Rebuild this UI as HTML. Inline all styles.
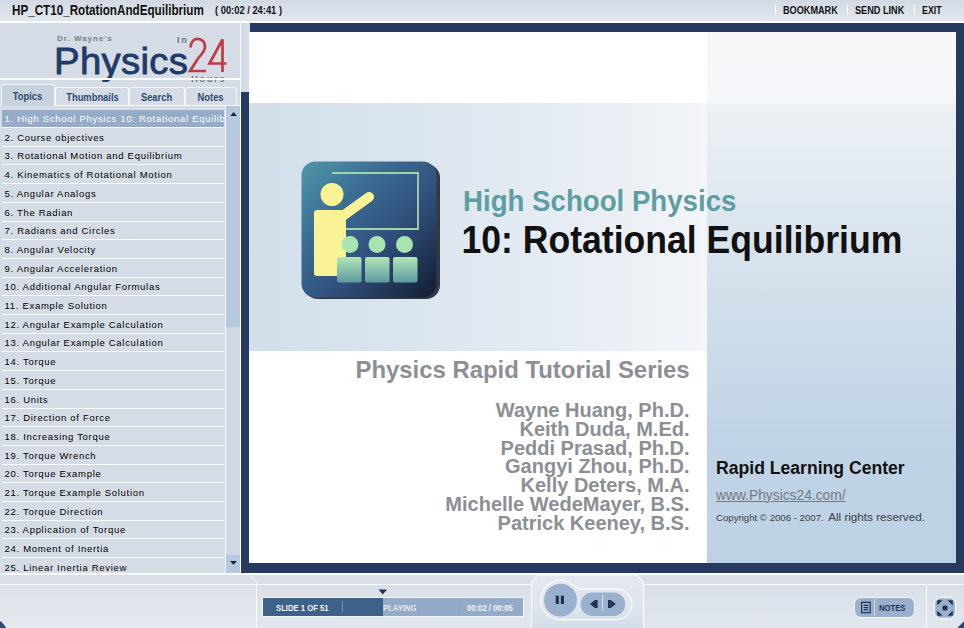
<!DOCTYPE html>
<html><head><meta charset="utf-8">
<style>
*{margin:0;padding:0;box-sizing:border-box}
html,body{width:964px;height:628px;overflow:hidden;background:#d6dce6;font-family:"Liberation Sans",sans-serif;position:relative}
div{position:absolute}
.tt{font-weight:bold;color:#111;white-space:nowrap;transform-origin:0 0}
.row{left:2px;width:222px;height:17px;background:#d6dce6;font-size:9.5px;color:#000;white-space:nowrap;overflow:hidden;letter-spacing:0.7px;padding-left:2.5px;line-height:17px}
.row.sel{background:#94acc9;color:#fff}
.sep{left:2px;width:222px;height:1px;background:#fbfcfd}
.tab{height:18px;border:1px solid #f4f6f9;border-bottom:none;border-radius:3px 3px 0 0;background:#d6dce6;font-size:10.5px;font-weight:bold;color:#2d4a70;text-align:center;line-height:17px;white-space:nowrap}
.auth{right:0;white-space:nowrap;font-weight:bold;color:#8c8f94;font-size:20px}
</style></head><body>
<!-- title bar -->
<div style="left:0;top:0;width:964px;height:21px;background:linear-gradient(#d3d9e3,#e2e7ee)"></div>
<div style="left:0;top:21px;width:964px;height:2px;background:#fbfcfd"></div>
<div class="tt" style="left:11.5px;top:2px;font-size:14px;transform:scaleX(0.833)">HP_CT10_RotationAndEquilibrium</div>
<div class="tt" style="left:215px;top:4px;font-size:10.5px;transform:scaleX(0.89)">( 00:02 / 24:41 )</div>
<div style="left:775px;top:5px;width:1px;height:10px;background:#fff"></div>
<div style="left:847px;top:5px;width:1px;height:10px;background:#fff"></div>
<div style="left:914px;top:5px;width:1px;height:10px;background:#fff"></div>
<div class="tt" style="left:783px;top:4px;font-size:10.5px;transform:scaleX(0.87)">BOOKMARK</div>
<div class="tt" style="left:855px;top:4px;font-size:10.5px;transform:scaleX(0.87)">SEND LINK</div>
<div class="tt" style="left:922px;top:4px;font-size:10.5px;transform:scaleX(0.84)">EXIT</div>

<!-- left panel -->
<div style="left:0;top:23px;width:240px;height:550px;background:#d6dce6"></div>
<div style="left:240px;top:23px;width:1px;height:550px;background:#f6f8fa"></div>
<!-- logo -->
<div class="tt" style="left:57px;top:33.5px;font-size:8px;color:#7b7f85;letter-spacing:1px">Dr. Wayne's</div>
<div class="tt" style="left:177px;top:34.5px;font-size:9px;color:#6d7177;letter-spacing:1.8px">In</div>
<div class="tt" style="left:54px;top:41px;font-size:36.5px;font-weight:normal;color:#203b68;letter-spacing:0.3px;transform:scaleX(1.05);-webkit-text-stroke:0.8px #203b68">Physics</div>
<svg style="position:absolute;left:0;top:0" width="240" height="85">
<path d="M190.5,47.5 C191,41 194.5,38.8 197.5,38.8 C202,38.8 205,42 205,47 C205,51 202,54 198,58.5 L190,71 L206,71" fill="none" stroke="#c23a42" stroke-width="2.7"/>
<path d="M222.5,72 L222.5,39.5 L209.5,63.5 L226.5,63.5" fill="none" stroke="#c23a42" stroke-width="2.7"/>
<text x="191" y="81.5" font-family="Liberation Sans" font-weight="bold" font-size="9.5" fill="#70757c" letter-spacing="1.5">Hours</text>
</svg>
<div style="left:0;top:78px;width:240px;height:2px;background:#fbfcfd"></div>
<div style="left:0;top:82px;width:240px;height:3px;background:#d6dce6"></div>
<!-- tabs -->
<div style="left:0;top:105px;width:240px;height:1px;background:#f4f6f9"></div>
<div class="tab" style="left:1px;top:84px;width:54px;height:22px;background:#c7d2df;line-height:22px"><span style="display:inline-block;transform:scaleX(0.89)">Topics</span></div>
<div class="tab" style="left:55px;top:87px;width:74px;line-height:18px"><span style="display:inline-block;transform:scaleX(0.89)">Thumbnails</span></div>
<div class="tab" style="left:129px;top:87px;width:56px;line-height:18px"><span style="display:inline-block;transform:scaleX(0.89)">Search</span></div>
<div class="tab" style="left:185px;top:87px;width:52px;line-height:18px"><span style="display:inline-block;transform:scaleX(0.89)">Notes</span></div>
<!-- scrollbar -->
<div style="left:225px;top:106px;width:1px;height:467px;background:#f4f6f9"></div>
<div style="left:226px;top:106px;width:14px;height:467px;background:#cfd8e3"></div>
<div style="left:226px;top:106px;width:14px;height:221px;background:#b5c8de"></div>
<div style="left:226px;top:555px;width:14px;height:18px;background:#b5c8de"></div>
<svg style="position:absolute;left:226px;top:106px" width="14" height="14"><path d="M4.3,10 L7.6,6 L10.9,10 Z" fill="#1a2438"/></svg>
<svg style="position:absolute;left:226px;top:556px" width="14" height="14"><path d="M4,5 L11,5 L7.5,8.8 Z" fill="#1a2438"/></svg>
<div class="row sel" style="top:110.0px">1. High School Physics 10: Rotational Equilibrium</div>
<div class="sep" style="top:127.0px"></div>
<div class="row" style="top:128.7px">2. Course objectives</div>
<div class="sep" style="top:145.7px"></div>
<div class="row" style="top:147.4px">3. Rotational Motion and Equilibrium</div>
<div class="sep" style="top:164.4px"></div>
<div class="row" style="top:166.1px">4. Kinematics of Rotational Motion</div>
<div class="sep" style="top:183.1px"></div>
<div class="row" style="top:184.8px">5. Angular Analogs</div>
<div class="sep" style="top:201.8px"></div>
<div class="row" style="top:203.5px">6. The Radian</div>
<div class="sep" style="top:220.5px"></div>
<div class="row" style="top:222.2px">7. Radians and Circles</div>
<div class="sep" style="top:239.2px"></div>
<div class="row" style="top:240.9px">8. Angular Velocity</div>
<div class="sep" style="top:257.9px"></div>
<div class="row" style="top:259.6px">9. Angular Acceleration</div>
<div class="sep" style="top:276.6px"></div>
<div class="row" style="top:278.3px">10. Additional Angular Formulas</div>
<div class="sep" style="top:295.3px"></div>
<div class="row" style="top:297.0px">11. Example Solution</div>
<div class="sep" style="top:314.0px"></div>
<div class="row" style="top:315.7px">12. Angular Example Calculation</div>
<div class="sep" style="top:332.7px"></div>
<div class="row" style="top:334.4px">13. Angular Example Calculation</div>
<div class="sep" style="top:351.4px"></div>
<div class="row" style="top:353.1px">14. Torque</div>
<div class="sep" style="top:370.1px"></div>
<div class="row" style="top:371.8px">15. Torque</div>
<div class="sep" style="top:388.8px"></div>
<div class="row" style="top:390.5px">16. Units</div>
<div class="sep" style="top:407.5px"></div>
<div class="row" style="top:409.2px">17. Direction of Force</div>
<div class="sep" style="top:426.2px"></div>
<div class="row" style="top:427.9px">18. Increasing Torque</div>
<div class="sep" style="top:444.9px"></div>
<div class="row" style="top:446.6px">19. Torque Wrench</div>
<div class="sep" style="top:463.6px"></div>
<div class="row" style="top:465.3px">20. Torque Example</div>
<div class="sep" style="top:482.3px"></div>
<div class="row" style="top:484.0px">21. Torque Example Solution</div>
<div class="sep" style="top:501.0px"></div>
<div class="row" style="top:502.7px">22. Torque Direction</div>
<div class="sep" style="top:519.7px"></div>
<div class="row" style="top:521.4px">23. Application of Torque</div>
<div class="sep" style="top:538.4px"></div>
<div class="row" style="top:540.1px">24. Moment of Inertia</div>
<div class="sep" style="top:557.1px"></div>
<div class="row" style="top:558.8px">25. Linear Inertia Review</div>
<div class="sep" style="top:575.8px"></div>
<!-- navy frame -->
<div style="left:250px;top:23px;width:714px;height:9px;background:#253a5e"></div>
<div style="left:241px;top:92px;width:8px;height:481px;background:#253a5e"></div>
<div style="left:956px;top:23px;width:8px;height:550px;background:#253a5e"></div>
<div style="left:241px;top:563px;width:723px;height:10px;background:#253a5e"></div>
<!-- slide -->
<div style="left:249px;top:32px;width:707px;height:531px;background:#fff;overflow:hidden">
  <div style="left:0;top:71px;width:458px;height:248px;background:linear-gradient(90deg,#d2dfeb 0%,#d8e3ed 25%,#e3eaf2 60%,#f3f5f8 100%)"></div>
  <div style="left:458px;top:0;width:249px;height:531px;background:linear-gradient(#f6f8fa 0px,#f5f7fa 70px,#edf1f5 72px,#dbe5ee 200px,#cbdbe9 318px,#c1d4e6 400px,#bdd1e5 531px)"></div>
  <svg style="position:absolute;left:52px;top:129px" width="140" height="140" viewBox="301 161 140 140">
    <defs>
      <linearGradient id="ig" x1="0" y1="0" x2="1" y2="1">
        <stop offset="0" stop-color="#4f98a8"/>
        <stop offset="0.3" stop-color="#3c6e94"/>
        <stop offset="0.6" stop-color="#30507c"/>
        <stop offset="1" stop-color="#121c30"/>
      </linearGradient>
      <linearGradient id="sg" x1="0" y1="0" x2="0" y2="1">
        <stop offset="0" stop-color="#b2e6b8"/>
        <stop offset="1" stop-color="#5e9aa0"/>
      </linearGradient>
    </defs>
    <rect x="304" y="164" width="136" height="135" rx="14" fill="#141a24" opacity="0.85"/><rect x="301.5" y="161.5" width="135" height="136" rx="14" fill="url(#ig)"/>
    <path d="M332,173 L418,173 L418,229 L346,229" fill="none" stroke="#9ed6a8" stroke-width="1.8"/>
    <circle cx="332" cy="194.5" r="11.5" fill="#f9f396"/>
    <path d="M340,218 L369,197" stroke="#f9f396" stroke-width="10" stroke-linecap="round"/>
    <rect x="314" y="210" width="32" height="66" rx="3" fill="#f9f396"/>
    <circle cx="350" cy="244.5" r="8.5" fill="#a8e4b0"/>
    <circle cx="377" cy="244.5" r="8.5" fill="#a8e4b0"/>
    <circle cx="404.5" cy="244.5" r="8.5" fill="#a8e4b0"/>
    <rect x="337" y="257" width="24.5" height="25.5" rx="2" fill="url(#sg)"/>
    <rect x="365" y="257" width="24.5" height="25.5" rx="2" fill="url(#sg)"/>
    <rect x="393" y="257" width="24.5" height="25.5" rx="2" fill="url(#sg)"/>
  </svg>
</div>
<div style="left:463px;top:184px;transform:scaleY(1.05);transform-origin:0 0;font-size:27.65px;font-weight:bold;color:#5e9ea3;white-space:nowrap;line-height:34px">High School Physics</div>
<div style="left:461.5px;top:216.5px;transform:scaleY(1.07);transform-origin:0 0;font-size:35.6px;font-weight:bold;color:#111;white-space:nowrap;line-height:44px">10: Rotational Equilibrium</div>
<div style="left:355.5px;top:354.5px;font-size:23.9px;font-weight:bold;color:#8c8f94;white-space:nowrap;line-height:30px">Physics Rapid Tutorial Series</div>
<div style="left:300px;top:399px;width:389.5px;height:140px">
  <div class="auth" style="top:0px">Wayne Huang, Ph.D.</div>
  <div class="auth" style="top:18.8px">Keith Duda, M.Ed.</div>
  <div class="auth" style="top:37.6px">Peddi Prasad, Ph.D.</div>
  <div class="auth" style="top:56.4px">Gangyi Zhou, Ph.D.</div>
  <div class="auth" style="top:75.2px">Kelly Deters, M.A.</div>
  <div class="auth" style="top:94px">Michelle WedeMayer, B.S.</div>
  <div class="auth" style="top:112.8px">Patrick Keeney, B.S.</div>
</div>
<div style="left:716px;top:458px;font-size:17.6px;font-weight:bold;color:#111;white-space:nowrap;line-height:20px">Rapid Learning Center</div>
<div style="left:716px;top:487.5px;font-size:13.8px;color:#76797e;white-space:nowrap;text-decoration:underline;line-height:16px">www.Physics24.com/</div>
<div style="left:716px;top:508.5px;color:#3d4047;white-space:nowrap;line-height:14px"><span style="font-size:9.63px">Copyright © 2006 - 2007.</span> <span style="font-size:11.7px">All rights reserved.</span></div>

<!-- bottom -->
<div style="left:0;top:573px;width:964px;height:2px;background:#fbfcfd"></div>
<div style="left:0;top:575px;width:964px;height:9px;background:#d9dee7"></div>
<div style="left:0;top:584px;width:257px;height:1px;background:#f6f8fa"></div>
<div style="left:0;top:585px;width:256px;height:43px;background:linear-gradient(#dde2ea,#e4e8ef)"></div>
<div style="left:256px;top:583px;width:1px;height:45px;background:#fbfcfd"></div>
<div style="left:257px;top:585px;width:707px;height:43px;background:linear-gradient(#d9dfe8,#e2e7ee)"></div>
<div style="left:257px;top:584px;width:707px;height:1px;background:#fbfcfd"></div>
<svg style="position:absolute;left:248px;top:573px" width="12" height="12"><path d="M1,1 L9,10" stroke="#fbfcfd" stroke-width="1"/></svg>
<!-- progress bar -->
<div style="left:262px;top:597px;width:262px;height:20px;background:#f6f8fa"></div>
<div style="left:263px;top:598px;width:120px;height:18px;background:#3e6189"></div>
<div style="left:383px;top:598px;width:140px;height:18px;background:#93abc8"></div>
<div style="left:342px;top:601px;width:1px;height:11px;background:#6f9aa8"></div>
<div style="left:459px;top:601px;width:1px;height:11px;background:#8aa0b5"></div>
<svg style="position:absolute;left:377px;top:588px" width="12" height="8"><path d="M1.5,1.5 L10,1.5 L5.75,6.5 Z" fill="#1f3254"/></svg>
<div class="tt" style="left:276px;top:602px;font-size:9.5px;color:#f4f6f9;transform:scaleX(0.81)">SLIDE 1 OF 51</div>
<div class="tt" style="left:383px;top:602px;font-size:9.5px;color:#e3e9f0;transform:scaleX(0.81)">PLAYING</div>
<div class="tt" style="left:467px;top:602px;font-size:9.5px;color:#f4f6f9;transform:scaleX(0.81)">00:02 / 00:05</div>
<!-- center controls -->
<svg style="position:absolute;left:530px;top:573px" width="116" height="55">
  <defs><linearGradient id="cg" x1="0" y1="0" x2="0" y2="1"><stop offset="0" stop-color="#e4e8ee"/><stop offset="0.6" stop-color="#dfe5ec"/><stop offset="1" stop-color="#d2dce8"/></linearGradient></defs>
  <path d="M1.5,55 L1.5,9.5 L7.5,2 L107,2 L113.5,9.5 L113.5,55" fill="url(#cg)" stroke="#f8fafc" stroke-width="1.2"/>
  <path d="M37.3,8.4 C42,10 45,15.5 50,16 L86.7,16 A15.3,15.3 0 0 1 86.7,46.6 L30.5,46.6 A19.7,19.7 0 1 1 37.3,8.4 Z" fill="none" stroke="#fafbfc" stroke-width="1.3"/>
  <circle cx="30.5" cy="27.2" r="16.4" fill="#99b1cf"/>
  <rect x="50.6" y="19.6" width="44.6" height="23.4" rx="11.7" fill="#99b1cf"/>
  <rect x="25.7" y="22.7" width="3.2" height="8.2" fill="#1f3254"/>
  <rect x="30.8" y="22.7" width="3.2" height="8.2" fill="#1f3254"/>
  <line x1="72.6" y1="21.7" x2="72.6" y2="37.8" stroke="#dde6ef" stroke-width="1"/>
  <path d="M60,31 L65,27 L65,35 Z" fill="#1f3254"/><rect x="65" y="27" width="2.6" height="8" fill="#1f3254"/>
  <rect x="78" y="27" width="2.8" height="8" fill="#1f3254"/><path d="M80.8,27 L85.8,31 L80.8,35 Z" fill="#1f3254"/>
</svg>
<div style="left:643px;top:585px;width:1px;height:43px;background:#fbfcfd"></div>
<!-- notes button -->
<div style="left:854px;top:597px;width:61px;height:21px;border:1px solid #f6f8fa;border-radius:7px;background:#9ab0cc"></div>
<div style="left:874px;top:599px;width:1px;height:17px;background:#cfdbe8"></div>
<svg style="position:absolute;left:859px;top:600px" width="14" height="15"><rect x="2.6" y="2.3" width="8.6" height="10.4" fill="none" stroke="#1f3458" stroke-width="1.2"/><path d="M4.6,5.3 H9.2 M4.6,7.6 H9.2 M4.6,9.9 H9.2" stroke="#1f3458" stroke-width="1.3"/></svg>
<div class="tt" style="left:879px;top:603px;font-size:9px;color:#1f3458;transform:scaleX(0.85)">NOTES</div>
<div style="left:926px;top:585px;width:1px;height:43px;background:#fbfcfd"></div>
<svg style="position:absolute;left:933px;top:596px" width="24" height="24">
  <path d="M5.5,1.5 L18.5,1.5 L22.5,5.5 L22.5,18.5 L18.5,22.5 L5.5,22.5 L1.5,18.5 L1.5,5.5 Z" fill="#9ab0cc" stroke="#f2f4f7" stroke-width="1.3"/>
  <path d="M4.2,4.2 L9.5,4.2 L4.2,9.5 Z M19.8,4.2 L14.5,4.2 L19.8,9.5 Z M4.2,19.8 L9.5,19.8 L4.2,14.5 Z M19.8,19.8 L14.5,19.8 L19.8,14.5 Z" fill="#1f3458"/>
  <rect x="9.5" y="9.5" width="5" height="5" rx="1.5" fill="#1f3458"/>
</svg>
<svg style="position:absolute;left:0;top:618px" width="10" height="10"><path d="M0,3 C2.5,4.5 4.5,7 6,10 L0,10 Z" fill="#2b4a72"/></svg>
<svg style="position:absolute;left:954px;top:618px" width="10" height="10"><path d="M10,3.5 C8,5 5.5,7.5 3.5,10 L10,10 Z" fill="#2b4a72"/></svg>
</body></html>
